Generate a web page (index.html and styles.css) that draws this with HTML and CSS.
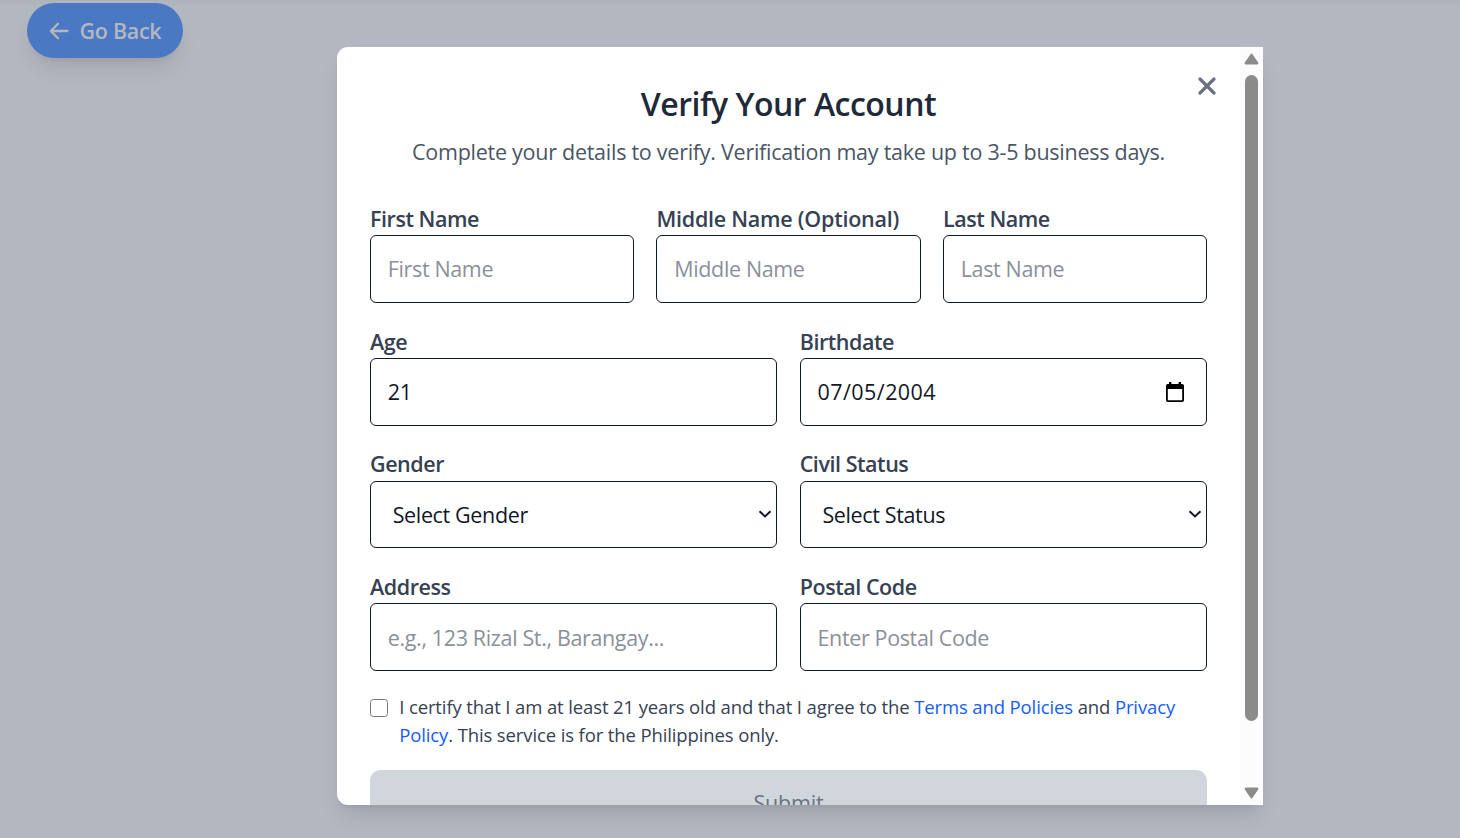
FILE: index.html
```html
<!DOCTYPE html>
<html lang="en">
<head>
<meta charset="utf-8">
<title>Verify Your Account</title>
<link rel="stylesheet" href="styles.css">
</head>
<body>
<main class="page">
  <button class="back" type="button">
    <svg class="back-icon" viewBox="0 0 20 18" fill="none"><path d="M9 1.800 1.800 9 9 16.200M2 9H18.400" stroke="currentColor" stroke-width="2.300" stroke-linecap="round" stroke-linejoin="round"/></svg>
    <span>Go Back</span>
  </button>
</main>
<div class="overlay">
  <section class="modal">
    <div class="content">
      <h1 class="title">Verify Your Account</h1>
      <p class="subtitle">Complete your details to verify. Verification may take up to 3-5 business days.</p>
      <form class="form">
        <div class="row three">
          <label class="field"><span class="label">First Name</span><input class="input" type="text" placeholder="First Name"></label>
          <label class="field"><span class="label wide">Middle Name (Optional)</span><input class="input" type="text" placeholder="Middle Name"></label>
          <label class="field"><span class="label">Last Name</span><input class="input" type="text" placeholder="Last Name"></label>
        </div>
        <div class="row">
          <label class="field"><span class="label">Age</span><input class="input" type="text" value="21"></label>
          <label class="field"><span class="label">Birthdate</span>
            <span class="control"><input class="input date" type="text" value="07/05/2004">
            <svg class="calendar" viewBox="0 0 18 20"><path d="M3 0h2.400v2h7.200V0H15v2h1.200Q18 2 18 3.800v14.400Q18 20 16.200 20H1.800Q0 20 0 18.200V3.800Q0 2 1.800 2H3zM1.800 7v11.200h14.400V7z" fill="#000" fill-rule="evenodd"/></svg></span>
          </label>
        </div>
        <div class="row">
          <label class="field"><span class="label">Gender</span>
            <span class="control"><select class="input select"><option>Select Gender</option></select>
            <svg class="chevron" viewBox="0 0 14 8" fill="none"><path d="M1.500 1.200 7 6.400 12.500 1.200" stroke="#101828" stroke-width="2"/></svg></span>
          </label>
          <label class="field"><span class="label">Civil Status</span>
            <span class="control"><select class="input select"><option>Select Status</option></select>
            <svg class="chevron" viewBox="0 0 14 8" fill="none"><path d="M1.500 1.200 7 6.400 12.500 1.200" stroke="#101828" stroke-width="2"/></svg></span>
          </label>
        </div>
        <div class="row">
          <label class="field"><span class="label">Address</span><input class="input" type="text" placeholder="e.g., 123 Rizal St., Barangay..."></label>
          <label class="field"><span class="label">Postal Code</span><input class="input" type="text" placeholder="Enter Postal Code"></label>
        </div>
        <div class="terms">
          <input class="check" type="checkbox">
          <p class="terms-text">I certify that I am at least 21 years old and that I agree to the <a class="link">Terms and Policies</a> and <a class="link">Privacy</a><br><a class="link">Policy</a>. This service is for the Philippines only.</p>
        </div>
        <button class="submit" type="button">Submit</button>
      </form>
    </div>
    <button class="close" type="button" aria-label="Close"><svg viewBox="0 0 18 18" fill="none"><path d="M2 2 16 16M16 2 2 16" stroke="currentColor" stroke-width="3.200" stroke-linecap="round"/></svg></button>
    <div class="scrollbar">
      <svg class="arrow" viewBox="0 0 15 12"><path d="M7.500 1.800 13.200 10.200H1.800Z" fill="#8b8b8b" stroke="#8b8b8b" stroke-width="2.400" stroke-linejoin="round"/></svg>
      <div class="thumb"></div>
      <svg class="arrow down" viewBox="0 0 15 12"><path d="M7.500 1.800 13.200 10.200H1.800Z" fill="#8b8b8b" stroke="#8b8b8b" stroke-width="2.400" stroke-linejoin="round"/></svg>
    </div>
  </section>
</div>
</body>
</html>
```
FILE: styles.css
```css
*, *::before, *::after { box-sizing: border-box; }
body {
  margin: 0;
  height: 838px;
  overflow: hidden;
  background: #b3b7c0;
  font-family: "Open Sans", "Noto Sans", sans-serif;
  font-size: 21.5px;
}
button, input, select { font: inherit; letter-spacing: inherit; border: 0; margin: 0; }
h1, p { margin: 0; }
.page { padding: 3px 27px; background: linear-gradient(#aeb2bb, #b3b7c0 8px); }
.back {
  display: flex;
  align-items: center;
  gap: 11px;
  width: 156px;
  height: 55px;
  padding: 0 0 0 21.500px;
  border-radius: 28px;
  background: #4a78c2;
  color: #b3b7c0;
  font-weight: 600;
  letter-spacing: -0.3px;
  white-space: nowrap;
  box-shadow: 0 14px 21px -4px rgba(0,0,0,.09), 0 6px 8px -6px rgba(0,0,0,.1);
}
.back-icon { width: 20px; height: 18px; flex: none; }
.overlay {
  position: absolute;
  inset: 0;
  padding: 47px 197px 33px 337px;
}
.modal {
  position: relative;
  display: flex;
  width: 926px;
  height: 758px;
  overflow: hidden;
  background: #fff;
  border-radius: 11px 0 0 11px;
  box-shadow: 0 14px 21px -4px rgba(0,0,0,.1), 0 6px 8px -6px rgba(0,0,0,.1);
}
.content { flex: 1; min-width: 0; padding: 32px 33px 0; }
.title { height: 50px; line-height: 50px; text-align: center; font-size: 32px; font-weight: 600; letter-spacing: -0.5px; color: #1e2939; }
.subtitle { height: 34px; line-height: 34px; margin-top: 6px; text-align: center; letter-spacing: -0.26px; color: #4a5565; white-space: nowrap; }
.form { display: flex; flex-direction: column; margin-top: 33.500px; }
.row { display: grid; grid-template-columns: 1fr 1fr; gap: 22.400px; height: 100.300px; margin-bottom: 22.400px; }
.row.three { grid-template-columns: 1fr 1fr 1fr; margin-bottom: 22.800px; }
.field { display: flex; flex-direction: column; min-width: 0; }
.label { height: 32.500px; line-height: 32.500px; font-weight: 600; letter-spacing: -0.45px; color: #364153; white-space: nowrap; }
.label.wide { letter-spacing: -0.25px; }
.control { position: relative; display: block; }
.input {
  display: block;
  width: 100%;
  height: 67.500px;
  padding: 0 16.800px;
  border: 1px solid #101828;
  border-radius: 6px;
  background: #fff;
  color: #101828;
  letter-spacing: -0.36px;
  outline: 0;
}
.input::placeholder { color: #8b9099; opacity: 1; }
.date { letter-spacing: 0.450px; }
.select { appearance: none; padding-left: 21.700px; }
.calendar { position: absolute; right: 23px; top: 24px; width: 18px; height: 20px; }
.chevron { position: absolute; right: 5.500px; top: 29.500px; width: 14px; height: 8px; }
.terms { display: flex; gap: 11.200px; height: 77px; margin-top: -1px; }
.check { appearance: none; flex: none; width: 18px; height: 18px; margin-top: 6px; border: 1.500px solid #767676; border-radius: 3.500px; background: #fff; }
.terms-text { font-size: 18.500px; line-height: 28px; letter-spacing: -0.12px; color: #364153; white-space: nowrap; }
.link { color: #155dfc; }
.submit { flex: none; height: 66px; border-radius: 11px; background: #d1d5dc; color: #6a7282; letter-spacing: -0.2px; }
.close { position: absolute; left: 861px; top: 30px; width: 18px; height: 18px; padding: 0; background: none; color: #6a7282; }
.close svg { display: block; }
.scrollbar { display: flex; flex-direction: column; align-items: center; flex: none; width: 23px; padding: 6px 0; background: #fcfcfc; }
.arrow { width: 15px; height: 12px; }
.thumb { width: 13px; height: 646px; margin: 10px 0 auto; border-radius: 7px; background: #8b8b8b; }
.down { transform: rotate(180deg); }
```
